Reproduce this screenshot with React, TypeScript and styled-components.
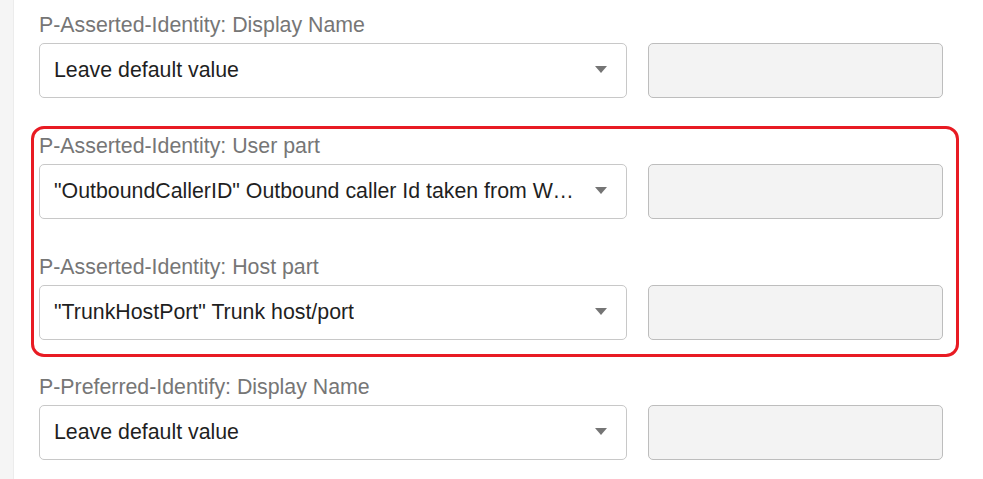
import React from "react";
import styled, { createGlobalStyle } from "styled-components";

const Global = createGlobalStyle`
  html, body { margin: 0; padding: 0; background: #ffffff; }
  body { font-family: "Liberation Sans", Arial, sans-serif; }
  * { box-sizing: border-box; }
`;

const Page = styled.div`
  display: flex;
  width: 983px;
  height: 479px;
  overflow: hidden;
  background: #ffffff;
`;

const SideStrip = styled.div`
  width: 14px;
  flex: none;
  background: #f5f5f5;
  border-right: 1px solid #ececec;
`;

const Content = styled.div`
  flex: 1;
  padding: 13px 40px 0 25px;
  display: flex;
  flex-direction: column;
`;

const Row = styled.div`
  display: flex;
  flex-direction: column;
  gap: 6px;
  margin-bottom: 36px;
  &:last-child { margin-bottom: 0; }
`;

const Label = styled.div`
  font-size: 21.33px;
  line-height: 24px;
  color: #767676;
  white-space: nowrap;
`;

const Fields = styled.div`
  display: grid;
  grid-template-columns: 588px 295px;
  column-gap: 21px;
`;

const Select = styled.div`
  position: relative;
  height: 55px;
  border: 1px solid #c8c8c8;
  border-radius: 5px;
  background: #ffffff;
  display: flex;
  align-items: center;
  padding: 0 50px 0 14px;
`;

const SelectValue = styled.span`
  font-size: 21.33px;
  color: #1f1f1f;
  white-space: nowrap;
  overflow: hidden;
  text-overflow: ellipsis;
  min-width: 0;
  margin-top: -1px;
`;

const Caret = styled.span`
  position: absolute;
  right: 19px;
  top: 22px;
  width: 0;
  height: 0;
  border-left: 6px solid transparent;
  border-right: 6px solid transparent;
  border-top: 7px solid #757575;
`;

const ValueBox = styled.div`
  height: 55px;
  border: 1px solid #bdbdbd;
  border-radius: 5px;
  background: #f3f3f3;
`;

const Highlight = styled.div`
  position: relative;
  display: flex;
  flex-direction: column;
  margin-bottom: 35px;
  &::after {
    content: "";
    position: absolute;
    top: -8px;
    bottom: -17px;
    left: -8px;
    right: -16px;
    border: 3px solid #e81b23;
    border-radius: 13px;
    pointer-events: none;
  }
`;

type FieldProps = { label: string; value: string };

const Field: React.FC<FieldProps> = ({ label, value }) => (
  <Row>
    <Label>{label}</Label>
    <Fields>
      <Select>
        <SelectValue>{value}</SelectValue>
        <Caret />
      </Select>
      <ValueBox />
    </Fields>
  </Row>
);

export default function App() {
  return (
    <Page>
      <Global />
      <SideStrip />
      <Content>
        <Field label="P-Asserted-Identity: Display Name" value="Leave default value" />
        <Highlight>
          <Field
            label="P-Asserted-Identity: User part"
            value={'"OutboundCallerID" Outbound caller Id taken from Web client settings'}
          />
          <Field label="P-Asserted-Identity: Host part" value={'"TrunkHostPort" Trunk host/port'} />
        </Highlight>
        <Field label="P-Preferred-Identify: Display Name" value="Leave default value" />
      </Content>
    </Page>
  );
}
